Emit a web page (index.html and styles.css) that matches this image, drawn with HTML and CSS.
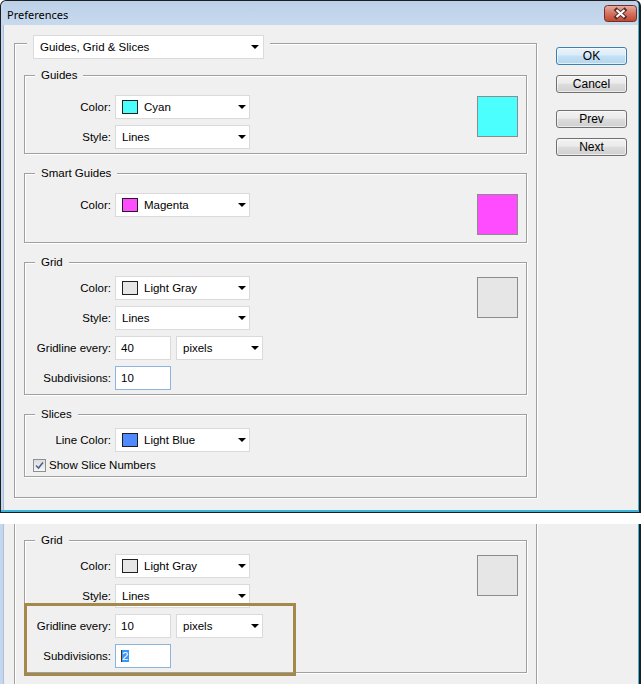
FILE: index.html
```html
<!DOCTYPE html>
<html lang="en">
<head>
    <meta charset="UTF-8">
    <title>Preferences</title>
    <link rel="stylesheet" href="styles.css">
</head>
<body>

    <!-- Preferences dialog -->
    <div class="window">
        <div class="titlebar">
            <span class="title">Preferences</span>
            <svg class="close" width="33" height="17" viewBox="0 0 33 17">
                <defs>
                    <linearGradient id="closeFill" x1="0" y1="0" x2="0" y2="1">
                        <stop offset="0" stop-color="#e9ada2"/>
                        <stop offset="0.5" stop-color="#d27361"/>
                        <stop offset="1" stop-color="#c2452d"/>
                    </linearGradient>
                </defs>
                <rect x="0.5" y="0.5" width="32" height="16" rx="3" fill="url(#closeFill)" stroke="#6e3229"/>
                <path d="M12.5 5 L20.5 12 M20.5 5 L12.5 12" stroke="#5a2b25" stroke-width="4" stroke-linecap="square"/>
                <path d="M12.5 5 L20.5 12 M20.5 5 L12.5 12" stroke="#fff" stroke-width="2.2"/>
            </svg>
        </div>

        <div class="client">
            <div class="panel">
                <div class="panel-legend">
                    <div class="select select-wide">Guides, Grid &amp; Slices</div>
                </div>

                <!-- Guides -->
                <div class="group">
                    <div class="group-title">Guides</div>
                    <div class="group-body">
                        <div class="rows">
                            <div class="row">
                                <span class="label">Color:</span>
                                <div class="select"><span class="swatch cyan"></span>Cyan</div>
                            </div>
                            <div class="row">
                                <span class="label">Style:</span>
                                <div class="select">Lines</div>
                            </div>
                        </div>
                        <div class="preview cyan"></div>
                    </div>
                </div>

                <!-- Smart Guides -->
                <div class="group group-smart">
                    <div class="group-title">Smart Guides</div>
                    <div class="group-body">
                        <div class="rows">
                            <div class="row">
                                <span class="label">Color:</span>
                                <div class="select"><span class="swatch magenta"></span>Magenta</div>
                            </div>
                        </div>
                        <div class="preview magenta"></div>
                    </div>
                </div>

                <!-- Grid -->
                <div class="group group-tight">
                    <div class="group-title">Grid</div>
                    <div class="group-body">
                        <div class="rows">
                            <div class="row">
                                <span class="label">Color:</span>
                                <div class="select"><span class="swatch gray"></span>Light Gray</div>
                            </div>
                            <div class="row">
                                <span class="label">Style:</span>
                                <div class="select">Lines</div>
                            </div>
                            <div class="row">
                                <span class="label">Gridline every:</span>
                                <div class="input">40</div>
                                <div class="select select-units">pixels</div>
                            </div>
                            <div class="row">
                                <span class="label">Subdivisions:</span>
                                <div class="input input-focus">10</div>
                            </div>
                        </div>
                        <div class="preview gray"></div>
                    </div>
                </div>

                <!-- Slices -->
                <div class="group group-tight">
                    <div class="group-title">Slices</div>
                    <div class="group-body">
                        <div class="rows">
                            <div class="row">
                                <span class="label">Line Color:</span>
                                <div class="select"><span class="swatch blue"></span>Light Blue</div>
                            </div>
                            <div class="check-row">
                                <span class="checkbox">
                                    <svg width="9" height="9" viewBox="0 0 9 9">
                                        <path d="M1 4.5 L3.5 7 L8 1.5" fill="none" stroke="#4a6390" stroke-width="1.6"/>
                                    </svg>
                                </span>
                                Show Slice Numbers
                            </div>
                        </div>
                    </div>
                </div>
            </div>

            <div class="buttons">
                <button class="btn btn-default">OK</button>
                <button class="btn">Cancel</button>
                <button class="btn btn-gap">Prev</button>
                <button class="btn">Next</button>
            </div>
        </div>
    </div>

    <!-- Cropped part of the dialog with new grid values -->
    <div class="window window-cut">
        <div class="client client-cut">
            <div class="panel panel-cut">
                <div class="group group-tight group-first">
                    <div class="group-title">Grid</div>
                    <div class="group-body">
                        <div class="rows">
                            <div class="row">
                                <span class="label">Color:</span>
                                <div class="select"><span class="swatch gray"></span>Light Gray</div>
                            </div>
                            <div class="row">
                                <span class="label">Style:</span>
                                <div class="select">Lines</div>
                            </div>
                            <div class="row">
                                <span class="label">Gridline every:</span>
                                <div class="input">10</div>
                                <div class="select select-units">pixels</div>
                            </div>
                            <div class="row">
                                <span class="label">Subdivisions:</span>
                                <div class="input input-focus"><span class="selected">2</span></div>
                            </div>
                        </div>
                        <div class="preview gray"></div>
                    </div>
                </div>
            </div>
        </div>
        <div class="highlight"></div>
    </div>

</body>
</html>
```

FILE: styles.css
```css
body {
    margin: 0;
    background: #fff;
    font-family: "Liberation Sans", Arial, sans-serif;
    font-size: 11.5px;
    color: #000;
}

/* Window frame */
.window {
    width: 641px;
    height: 513px;
    box-sizing: border-box;
    border: 1px solid #1e1e1e;
    border-right-width: 2px;
    border-radius: 6px 6px 0 0;
    padding: 0 1px 2px 2px;
    background: #c4d7ec;
    box-shadow: inset -1px -2px 0 #3bb4dc;
    display: flex;
    flex-direction: column;
}

.titlebar {
    height: 24px;
    display: flex;
    align-items: flex-start;
    justify-content: space-between;
    padding: 0 1px 0 4px;
    background: linear-gradient(#bcd1e8, #c7d9ed);
    border-radius: 5px 5px 0 0;
}

.title {
    font-family: "Noto Sans", sans-serif;
    font-size: 11px;
    line-height: 14px;
    margin-top: 7px;
    color: #000;
}

.close {
    display: block;
    margin-top: 4px;
}

.client {
    flex: 1;
    display: flex;
    align-items: flex-start;
    background: #f0f0f0;
    border-left: 1px solid #a9c0db;
    padding: 18px 0 0 10px;
}

/* Etched group boxes */
.panel {
    width: 523px;
    height: 455px;
    box-sizing: border-box;
    border: 1px solid #a0a0a0;
    box-shadow: 1px 1px 0 #fff, inset 1px 1px 0 #fff;
}

.panel-legend {
    width: fit-content;
    margin: -9px 0 0 12px;
    padding: 0 6px;
    background: #f0f0f0;
}

.group {
    margin: 19px 9px 0;
    padding: 0 8px 4px 0;
    border: 1px solid #a0a0a0;
    box-shadow: 1px 1px 0 #fff, inset 1px 1px 0 #fff;
}

.panel-legend + .group,
.group-first {
    margin-top: 16px;
}

.group-smart {
    padding-bottom: 7px;
}

.group-title {
    width: fit-content;
    height: 14px;
    line-height: 14px;
    margin: -8px 0 0 10px;
    padding: 0 6px;
    background: #f0f0f0;
}

.group-body {
    display: flex;
    justify-content: space-between;
    align-items: flex-start;
    margin-top: 13px;
}

.group-tight .group-body {
    margin-top: 7px;
}

.rows {
    display: flex;
    flex-direction: column;
    gap: 6px;
}

.row {
    display: flex;
    align-items: center;
    height: 24px;
}

.label {
    width: 86px;
    margin-right: 4px;
    text-align: right;
}

/* Drop-down lists and fields */
.select {
    display: flex;
    align-items: center;
    width: 135px;
    height: 24px;
    box-sizing: border-box;
    padding: 0 3px 0 6px;
    border: 1px solid #dadada;
    background: #fff;
}

.select::after {
    content: "";
    margin-left: auto;
    border-left: 4px solid transparent;
    border-right: 4px solid transparent;
    border-top: 4px solid #000;
}

.select-wide {
    width: 231px;
    padding-right: 4px;
}

.select-units {
    width: 87px;
    margin-left: 5px;
}

.swatch {
    width: 16px;
    height: 14px;
    box-sizing: border-box;
    margin-right: 6px;
    border: 1px solid #202020;
}

.input {
    display: flex;
    align-items: center;
    width: 56px;
    height: 24px;
    box-sizing: border-box;
    padding-left: 5px;
    border: 1px solid #dadada;
    background: #fff;
}

.input-focus {
    border-color: #8cb4e0;
}

.selected {
    background: #3399ff;
    color: #fff;
    border-left: 1px solid #5a2a10;
    padding-right: 1px;
}

.preview {
    width: 41px;
    height: 41px;
    box-sizing: border-box;
    margin-top: 1px;
    border: 1px solid #8c8c8c;
}

.cyan { background: #4cffff; }
.magenta { background: #ff4cff; }
.gray { background: #e6e6e6; }
.blue { background: #4f8bff; }

.check-row {
    display: flex;
    align-items: center;
    height: 14px;
    padding-left: 8px;
    gap: 3px;
}

.checkbox {
    display: flex;
    align-items: center;
    justify-content: center;
    width: 13px;
    height: 13px;
    box-sizing: border-box;
    border: 1px solid #8e8f8f;
    background: linear-gradient(#dcdcdc, #f7f7f7);
}

/* Buttons */
.buttons {
    display: flex;
    flex-direction: column;
    width: 71px;
    margin: 4px 0 0 19px;
}

.btn {
    height: 18px;
    padding: 0;
    font-family: inherit;
    font-size: 12px;
    font-weight: normal;
    color: #000;
    border: 1px solid #707070;
    border-radius: 3px;
    background: linear-gradient(#f2f2f2, #ebebeb 45%, #dddddd 50%, #cfcfcf);
    box-shadow: inset 0 0 0 1px rgba(255, 255, 255, 0.6);
}

.btn + .btn {
    margin-top: 10px;
}

.btn-default {
    border-color: #3c7fb1;
    background: linear-gradient(#eaf4fb, #dbecf8 45%, #c4e0f4 50%, #b3d6ef);
}

.btn.btn-gap {
    margin-top: 17px;
}

/* Cropped repeat of the grid section */
.window-cut {
    position: relative;
    height: 160px;
    margin-top: 11px;
    border: none;
    border-right: 2px solid #1e1e1e;
    border-radius: 0;
    padding: 0 1px 0 3px;
    box-shadow: inset -1px 0 0 #3bb4dc;
}

.client-cut {
    padding-top: 0;
}

.panel-cut {
    height: 160px;
    border-top: none;
    border-bottom: none;
    box-shadow: 1px 0 0 #fff, inset 1px 0 0 #fff;
}

.highlight {
    position: absolute;
    left: 24px;
    top: 79px;
    width: 272px;
    height: 73px;
    box-sizing: border-box;
    border: 3px solid #a5884b;
}
```
